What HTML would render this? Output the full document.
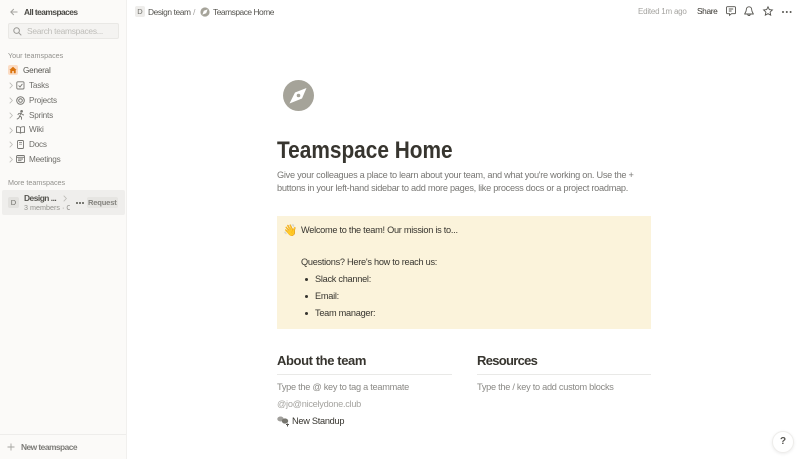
<!DOCTYPE html>
<html><head><meta charset="utf-8">
<style>
html,body{margin:0;padding:0;background:#fff}
body{width:800px;height:459px;overflow:hidden;position:relative;font-family:"Liberation Sans",sans-serif;color:#37352f}
.t{position:absolute;white-space:nowrap;line-height:14px;filter:blur(.2px)}
.a{position:absolute}
#side{position:absolute;left:0;top:0;width:126px;height:459px;background:#fbfaf8;border-right:1px solid #f1f0ee}
.nav{font-size:8.2px;letter-spacing:-.22px;color:#6e6d69}
.b{font-size:9.2px;letter-spacing:-.27px}
svg{position:absolute;overflow:visible}
</style></head><body>
<div id="side"></div>
<svg style="left:10px;top:8px" width="8" height="8" viewBox="0 0 8 8" fill="none" stroke="#a5a4a0" stroke-width="1"><path d="M7.5 4H.8M3.800 1 .8 4l3 3"/></svg>
<div class="t" style="left:24px;top:5px;font-size:8.4px;letter-spacing:-.53px;font-weight:bold;color:#4a4945">All teamspaces</div>
<div class="a" style="left:8px;top:23px;width:109px;height:14px;background:#f4f3f1;border:1px solid #e9e8e5;border-radius:2px"></div>
<svg style="left:13px;top:27px" width="9" height="9" viewBox="0 0 9 9" fill="none" stroke="#9b9a96" stroke-width="1"><circle cx="3.600" cy="3.600" r="2.800"/><path d="M5.700 5.700 8.300 8.300"/></svg>
<div class="t" style="left:27px;top:24px;font-size:8.4px;letter-spacing:-.25px;color:#bdbcb8">Search teamspaces...</div>
<div class="t" style="left:8px;top:49px;font-size:7.2px;color:#92918d">Your teamspaces</div>
<div class="a" style="left:8px;top:65px;width:10px;height:10px;background:#fbdcc4;border-radius:2px"></div>
<svg style="left:9px;top:66px" width="8" height="8" viewBox="0 0 8 8"><path d="M4 .8 7.600 4H6.700V7.200H4.800V5H3.200V7.200H1.300V4H.4Z" fill="#d9730d"/></svg>
<div class="t nav" style="left:23px;top:64px;color:#55544f">General</div>

<svg style="left:9px;top:82px" width="4" height="7" viewBox="0 0 4 7" fill="none" stroke="#bcbbb7" stroke-width=".8"><path d="M.7.7 3.400 3.500.7 6.300"/></svg>
<svg style="left:16px;top:81px" width="9" height="9" viewBox="0 0 9 9" fill="none" stroke="#777672" stroke-width=".9"><rect x=".8" y=".8" width="7.200" height="7.200" rx="1"/><path d="M2.600 4.500 4 6 6.400 2.900"/></svg>
<div class="t nav" style="left:29px;top:79px">Tasks</div>

<svg style="left:9px;top:97px" width="4" height="7" viewBox="0 0 4 7" fill="none" stroke="#bcbbb7" stroke-width=".8"><path d="M.7.7 3.400 3.500.7 6.300"/></svg>
<svg style="left:16px;top:96px" width="9" height="9" viewBox="0 0 9 9" fill="none" stroke="#777672" stroke-width="1"><circle cx="4.500" cy="4.500" r="3.800"/><circle cx="4.500" cy="4.500" r="1.800"/></svg>
<div class="t nav" style="left:29px;top:94px">Projects</div>

<svg style="left:9px;top:112px" width="4" height="7" viewBox="0 0 4 7" fill="none" stroke="#bcbbb7" stroke-width=".8"><path d="M.7.7 3.400 3.500.7 6.300"/></svg>
<svg style="left:16px;top:110px" width="9" height="10" viewBox="0 0 9 10" fill="none" stroke="#777672" stroke-width=".9"><circle cx="5.600" cy="1.300" r=".9" fill="#777672"/><path d="M5 3 3.800 6 5.500 7.200 5.500 9.600M3.800 6 2.800 8 .8 9.200M5 3 2.600 3.600 1.800 5M5 3 6.200 4.600 8 5"/></svg>
<div class="t nav" style="left:29px;top:109px">Sprints</div>

<svg style="left:9px;top:127px" width="4" height="7" viewBox="0 0 4 7" fill="none" stroke="#bcbbb7" stroke-width=".8"><path d="M.7.7 3.400 3.500.7 6.300"/></svg>
<svg style="left:16px;top:126px" width="9" height="8" viewBox="0 0 9 8" fill="none" stroke="#777672" stroke-width=".9"><path d="M4.500 1.500C3.600.8 2 .6.500.8v5.600c1.500-.2 3.100 0 4 .7.9-.7 2.500-.9 4-.7V.8C7 .6 5.400.8 4.500 1.500V7.100"/></svg>
<div class="t nav" style="left:29px;top:123px">Wiki</div>

<svg style="left:9px;top:141px" width="4" height="7" viewBox="0 0 4 7" fill="none" stroke="#bcbbb7" stroke-width=".8"><path d="M.7.7 3.400 3.500.7 6.300"/></svg>
<svg style="left:17px;top:140px" width="7" height="9" viewBox="0 0 7 9" fill="none" stroke="#777672" stroke-width=".9"><rect x=".5" y=".5" width="6" height="8" rx="1"/><path d="M2 2.500h3M2 4.200h3" stroke-width=".7"/></svg>
<div class="t nav" style="left:29px;top:138px">Docs</div>

<svg style="left:9px;top:156px" width="4" height="7" viewBox="0 0 4 7" fill="none" stroke="#bcbbb7" stroke-width=".8"><path d="M.7.7 3.400 3.500.7 6.300"/></svg>
<svg style="left:16px;top:155px" width="9" height="8" viewBox="0 0 9 8" fill="none" stroke="#777672" stroke-width=".9"><rect x=".5" y=".5" width="8" height="7" rx="1"/><path d="M.5 2.300h8M2 4h5M2 5.700h3.500"/></svg>
<div class="t nav" style="left:29px;top:153px">Meetings</div>

<div class="t" style="left:8px;top:176px;font-size:7.2px;color:#92918d">More teamspaces</div>
<div class="a" style="left:2px;top:190px;width:123px;height:25px;background:#efeeec;border-radius:2px"></div>
<div class="a" style="left:8px;top:197px;width:11px;height:11px;background:#e3e2df;border-radius:2px;font-size:7.500px;line-height:12px;text-align:center;color:#6f6e69">D</div>
<div class="t" style="left:24px;top:191px;font-size:8.400px;letter-spacing:-.5px;font-weight:bold;color:#55544f">Design ...</div>
<svg style="left:63px;top:195px" width="4" height="7" viewBox="0 0 4 7" fill="none" stroke="#bcbbb7" stroke-width=".8"><path d="M.7.7 3.400 3.500.7 6.300"/></svg>
<div class="a" style="left:24px;top:201px;width:46px;height:14px;overflow:hidden"><div class="t" style="left:0;top:0;font-size:7.200px;color:#92918d">3 members · Closed</div></div>
<div class="a" style="left:76px;top:201.500px;width:2px;height:2px;background:#55544f;border-radius:50%;box-shadow:3px 0 #55544f,6px 0 #55544f"></div>
<div class="a" style="left:87px;top:197px;width:31px;height:11px;background:#e6e5e2;border-radius:2px"></div>
<div class="t" style="left:88px;top:196px;font-size:7.600px;letter-spacing:-.2px;font-weight:bold;color:#85847f">Request</div>
<div class="a" style="left:0;top:434px;width:126px;height:1px;background:#eeedeb"></div>
<svg style="left:7px;top:443px" width="8" height="8" viewBox="0 0 8 8" stroke="#a5a4a0" stroke-width=".9"><path d="M4 .5v7M.5 4h7"/></svg>
<div class="t" style="left:21px;top:440px;font-size:8.400px;letter-spacing:-.53px;font-weight:bold;color:#7d7c78">New teamspace</div>

<div class="a" style="left:135px;top:6px;width:10px;height:11px;background:#eeedeb;border-radius:2px;font-size:7.500px;line-height:12px;text-align:center;color:#6f6e69">D</div>
<div class="t" style="left:148px;top:5px;font-size:8.400px;letter-spacing:-.4px;color:#55544f">Design team</div>
<div class="t" style="left:193px;top:5px;font-size:8.700px;color:#a5a4a0">/</div>
<svg style="left:200px;top:7px" width="10" height="10" viewBox="0 0 10 10"><circle cx="5" cy="5" r="4.600" fill="#a5a399"/><path d="M7.600 2.400 6.200 6.200 2.400 7.600 3.800 3.800Z" fill="#fff"/></svg>
<div class="t" style="left:213px;top:5px;font-size:8.400px;letter-spacing:-.47px;color:#55544f">Teamspace Home</div>
<div class="t" style="left:638px;top:5px;font-size:8px;letter-spacing:-.23px;color:#a5a4a0">Edited 1m ago</div>
<div class="t" style="left:697px;top:4px;font-size:8.400px;letter-spacing:-.4px;color:#37352f">Share</div>
<svg style="left:726px;top:6px" width="10" height="10" viewBox="0 0 10 10" fill="none" stroke="#55544f" stroke-width=".9"><path d="M1.500.7h7a1 1 0 0 1 1 1v5a1 1 0 0 1-1 1H5.500L3.500 9.300V7.700h-2a1 1 0 0 1-1-1v-5a1 1 0 0 1 1-1Z"/><path d="M2.800 3h4.400M2.800 5h2.800"/></svg>
<svg style="left:744px;top:6px" width="10" height="11" viewBox="0 0 10 11" fill="none" stroke="#55544f" stroke-width=".9"><path d="M5 .8C3.200.8 2.300 2.200 2.300 3.800c0 2-1.600 3.500-1.600 4.200h8.600c0-.7-1.600-2.200-1.600-4.200C7.700 2.200 6.800.8 5 .8ZM3.800 8.400a1.200 1.200 0 0 0 2.400 0"/></svg>
<svg style="left:763px;top:6px" width="10" height="10" viewBox="0 0 10 10" fill="none" stroke="#55544f" stroke-width=".9"><path d="M5 .8 6.300 3.600 9.400 4 7.100 6.100 7.700 9.200 5 7.700 2.300 9.200 2.900 6.100.6 4 3.700 3.600Z"/></svg>
<div class="a" style="left:782px;top:10.500px;width:2.200px;height:2.200px;background:#55544f;border-radius:50%;box-shadow:3.800px 0 #55544f,7.600px 0 #55544f"></div>

<svg style="left:283px;top:80px" width="31" height="31" viewBox="0 0 31 31"><circle cx="15.500" cy="15.500" r="15.500" fill="#a5a399"/><path d="M23.500 8 19 18.500 6.500 23.500 12 12.500Z" fill="#fff"/><circle cx="15.500" cy="15.500" r="1.800" fill="#a5a399"/></svg>
<div class="t" style="left:277px;top:137px;line-height:28px;font-size:24.500px;font-weight:bold;color:#37352f;transform:scaleX(.85);transform-origin:left center">Teamspace Home</div>
<div class="t b" style="left:277px;top:168px;color:#787774">Give your colleagues a place to learn about your team, and what you're working on. Use the +</div>
<div class="t b" style="left:277px;top:181px;color:#787774">buttons in your left-hand sidebar to add more pages, like process docs or a project roadmap.</div>

<div class="a" style="left:277px;top:216px;width:374px;height:113px;background:#fbf3db"></div>
<div class="t" style="left:283px;top:223px;font-size:11.500px;font-family:'DejaVu Sans',sans-serif;color:#f0b63c">👋</div>
<div class="t b" style="left:301px;top:223px">Welcome to the team! Our mission is to...</div>
<div class="t b" style="left:301px;top:255px">Questions? Here's how to reach us:</div>
<div class="a" style="left:305px;top:278px;width:3px;height:3px;background:#37352f;border-radius:50%"></div>
<div class="t b" style="left:315px;top:272px">Slack channel:</div>
<div class="a" style="left:305px;top:295px;width:3px;height:3px;background:#37352f;border-radius:50%"></div>
<div class="t b" style="left:315px;top:289px">Email:</div>
<div class="a" style="left:305px;top:312px;width:3px;height:3px;background:#37352f;border-radius:50%"></div>
<div class="t b" style="left:315px;top:306px">Team manager:</div>

<div class="t" style="left:277px;top:354px;font-size:13px;letter-spacing:-.4px;font-weight:bold">About the team</div>
<div class="a" style="left:277px;top:374px;width:175px;height:1px;background:#e9e9e7"></div>
<div class="t" style="left:477px;top:354px;font-size:13px;letter-spacing:-.7px;font-weight:bold">Resources</div>
<div class="a" style="left:477px;top:374px;width:174px;height:1px;background:#e9e9e7"></div>
<div class="t b" style="left:277px;top:380px;color:#8a8985">Type the @ key to tag a teammate</div>
<div class="t b" style="left:477px;top:380px;color:#8a8985">Type the / key to add custom blocks</div>
<div class="t b" style="left:277px;top:397px;color:#a5a4a0">@jo@nicelydone.club</div>
<svg style="left:277px;top:416px" width="13" height="11" viewBox="0 0 13 11"><ellipse cx="3.500" cy="3" rx="3.200" ry="2.500" fill="#a09f9b"/><ellipse cx="8" cy="5" rx="3.200" ry="2.600" fill="#77766f"/><path d="M9 8.500h3M10.500 7.500v3" stroke="#55544f" stroke-width="1"/></svg>
<div class="t b" style="left:292px;top:414px;color:#37352f">New Standup</div>

<div class="a" style="left:772px;top:431px;width:20px;height:20px;background:#fff;border:1px solid #eeedeb;border-radius:50%;box-shadow:0 1px 3px rgba(0,0,0,.08);font-size:10px;font-weight:bold;line-height:20px;text-align:center;color:#55544f">?</div>
</body></html>
